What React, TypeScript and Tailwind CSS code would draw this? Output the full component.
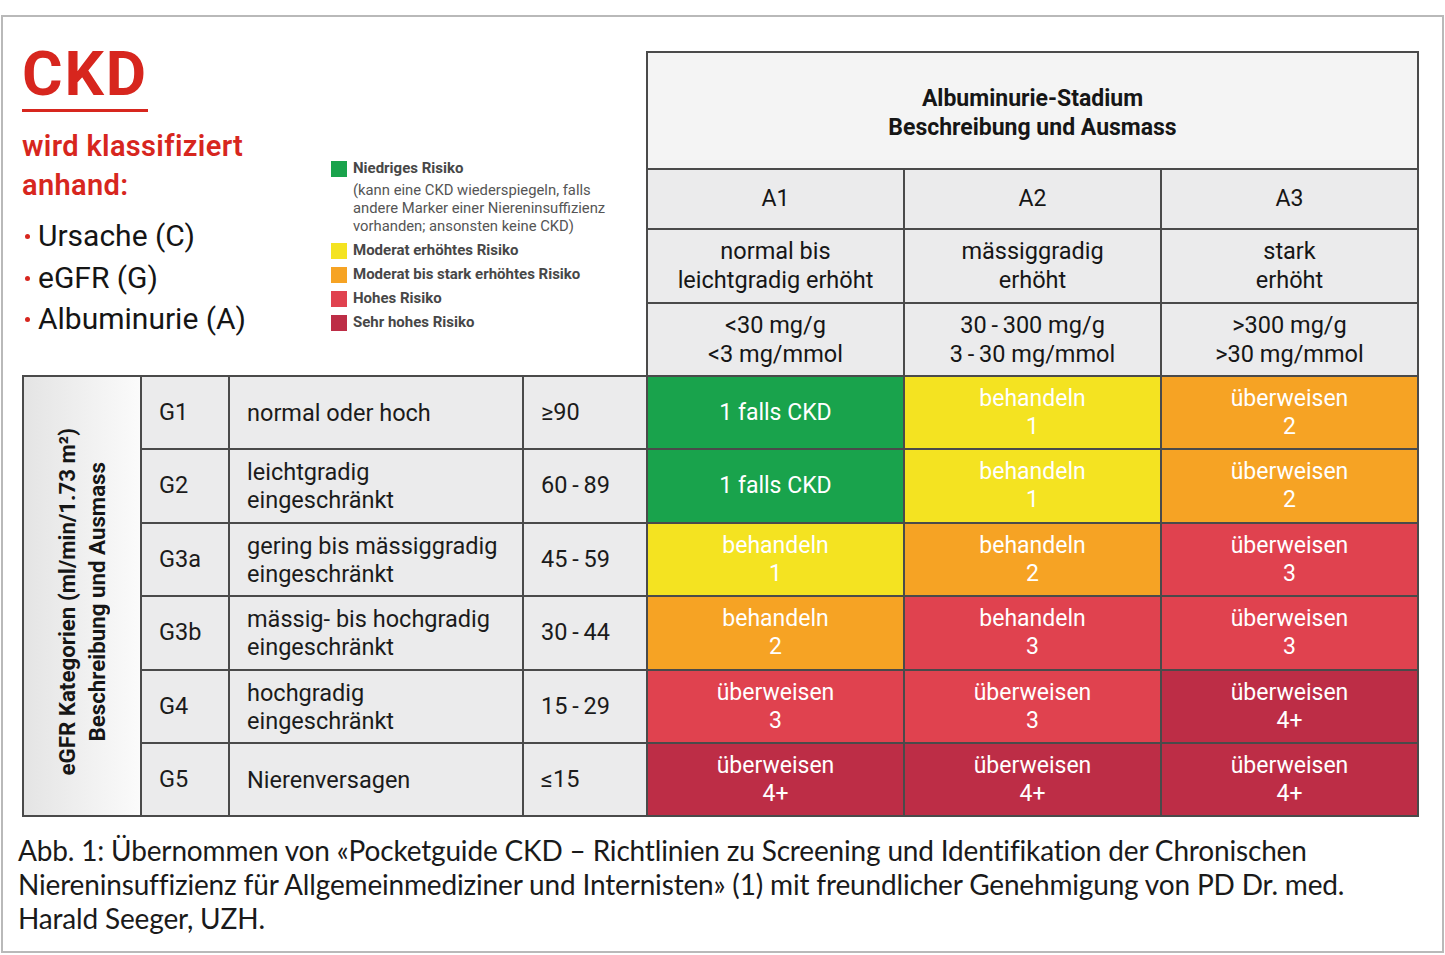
import React from "react";

const RED = "#d7261e";
const GREEN = "#19a34c";
const YELLOW = "#f4e321";
const ORANGE = "#f6a324";
const CORAL = "#e0424f";
const WINE = "#bd2d46";

type Cell = { bg: string; lines: string[] };

const rows: { g: string; desc: string[]; range: string; cells: Cell[] }[] = [
  {
    g: "G1",
    desc: ["normal oder hoch"],
    range: "≥90",
    cells: [
      { bg: "bg-[#19a34c]", lines: ["1 falls CKD"] },
      { bg: "bg-[#f4e321]", lines: ["behandeln", "1"] },
      { bg: "bg-[#f6a324]", lines: ["überweisen", "2"] },
    ],
  },
  {
    g: "G2",
    desc: ["leichtgradig", "eingeschränkt"],
    range: "60\u2009-\u200989",
    cells: [
      { bg: "bg-[#19a34c]", lines: ["1 falls CKD"] },
      { bg: "bg-[#f4e321]", lines: ["behandeln", "1"] },
      { bg: "bg-[#f6a324]", lines: ["überweisen", "2"] },
    ],
  },
  {
    g: "G3a",
    desc: ["gering bis mässiggradig", "eingeschränkt"],
    range: "45\u2009-\u200959",
    cells: [
      { bg: "bg-[#f4e321]", lines: ["behandeln", "1"] },
      { bg: "bg-[#f6a324]", lines: ["behandeln", "2"] },
      { bg: "bg-[#e0424f]", lines: ["überweisen", "3"] },
    ],
  },
  {
    g: "G3b",
    desc: ["mässig- bis hochgradig", "eingeschränkt"],
    range: "30\u2009-\u200944",
    cells: [
      { bg: "bg-[#f6a324]", lines: ["behandeln", "2"] },
      { bg: "bg-[#e0424f]", lines: ["behandeln", "3"] },
      { bg: "bg-[#e0424f]", lines: ["überweisen", "3"] },
    ],
  },
  {
    g: "G4",
    desc: ["hochgradig", "eingeschränkt"],
    range: "15\u2009-\u200929",
    cells: [
      { bg: "bg-[#e0424f]", lines: ["überweisen", "3"] },
      { bg: "bg-[#e0424f]", lines: ["überweisen", "3"] },
      { bg: "bg-[#bd2d46]", lines: ["überweisen", "4+"] },
    ],
  },
  {
    g: "G5",
    desc: ["Nierenversagen"],
    range: "≤15",
    cells: [
      { bg: "bg-[#bd2d46]", lines: ["überweisen", "4+"] },
      { bg: "bg-[#bd2d46]", lines: ["überweisen", "4+"] },
      { bg: "bg-[#bd2d46]", lines: ["überweisen", "4+"] },
    ],
  },
];

const legend = [
  { color: YELLOW, label: "Moderat erhöhtes Risiko" },
  { color: ORANGE, label: "Moderat bis stark erhöhtes Risiko" },
  { color: CORAL, label: "Hohes Risiko" },
  { color: WINE, label: "Sehr hohes Risiko" },
];

function Bullet({ children }: { children: React.ReactNode }) {
  return (
    <div className="flex items-center h-[41.5px]">
      <span className="w-[5px] h-[5px] rounded-full bg-[#d7261e] ml-[3px] mr-[8px] mt-[2px]" />
      <span>{children}</span>
    </div>
  );
}

function Intro() {
  return (
    <div className="w-[309px] shrink-0 pt-[26px]">
      <div className="text-[62px] leading-[62px] font-bold text-[#d7261e] tracking-[0.03em]">CKD</div>
      <div className="w-[126px] h-[3px] bg-[#d7261e] mt-[4px]" />
      <div className="mt-[15px] text-[29px] leading-[39px] font-semibold tracking-[0.012em]" style={{ color: RED }}>
        <div>wird klassifiziert</div>
        <div>anhand:</div>
      </div>
      <div className="mt-[10px] text-[30px] leading-[41.5px] text-[#151515]">
        <Bullet>Ursache (C)</Bullet>
        <Bullet>eGFR (G)</Bullet>
        <Bullet>Albuminurie (A)</Bullet>
      </div>
    </div>
  );
}

function Legend() {
  return (
    <div className="w-[315px] shrink-0 pt-[139.5px] text-[#474747]">
      <div className="flex items-center h-[24px] gap-[6px]">
        <span className="w-[16px] h-[16px] shrink-0" style={{ background: GREEN }} />
        <span className="text-[15px] font-bold">Niedriges Risiko</span>
      </div>
      <div className="pl-[22px] text-[14.8px] leading-[18px] text-[#555]">
        <div>(kann eine CKD wiederspiegeln, falls</div>
        <div>andere Marker einer Niereninsuffizienz</div>
        <div>vorhanden; ansonsten keine CKD)</div>
      </div>
      <div className="mt-[4px]">
        {legend.map((l) => (
          <div key={l.label} className="flex items-center h-[24px] gap-[6px]">
            <span className="w-[16px] h-[16px] shrink-0" style={{ background: l.color }} />
            <span className="text-[15px] font-bold">{l.label}</span>
          </div>
        ))}
      </div>
    </div>
  );
}

function AlbuminHeader() {
  const cols = [
    { a: "A1", d: ["normal bis", "leichtgradig erhöht"], r: ["<30 mg/g", "<3 mg/mmol"] },
    { a: "A2", d: ["mässiggradig", "erhöht"], r: ["30\u2009-\u2009300 mg/g", "3\u2009-\u200930 mg/mmol"] },
    { a: "A3", d: ["stark", "erhöht"], r: [">300 mg/g", ">30 mg/mmol"] },
  ];
  return (
    <div className="mt-[34px] grid grid-cols-[255px_255px_255px] grid-rows-[115px_58px_72px_71px] gap-[2px] bg-[#4a4a4a] px-[2px] pt-[2px] text-[#161616]">
      <div className="col-span-3 bg-[#f4f4f4] flex flex-col items-center justify-center text-[23px] leading-[29px] font-bold pt-[4px]">
        <div>Albuminurie-Stadium</div>
        <div>Beschreibung und Ausmass</div>
      </div>
      {cols.map((c) => (
        <div key={c.a} className="bg-[#ebebec] flex items-center justify-center text-[23px]">
          {c.a}
        </div>
      ))}
      {cols.map((c) => (
        <div key={c.a + "d"} className="bg-[#ebebec] flex flex-col items-center justify-center text-[23.5px] leading-[29px]">
          {c.d.map((t) => (
            <div key={t}>{t}</div>
          ))}
        </div>
      ))}
      {cols.map((c) => (
        <div key={c.a + "r"} className="bg-[#ebebec] flex flex-col items-center justify-center text-[23.5px] leading-[29px]">
          {c.r.map((t) => (
            <div key={t}>{t}</div>
          ))}
        </div>
      ))}
    </div>
  );
}

function Body() {
  return (
    <div className="grid grid-cols-[116px_86px_292px_122px_255px_255px_255px] grid-rows-[71px_72px_71px_72px_71px_71px] gap-[2px] bg-[#4a4a4a] p-[2px] w-fit text-[23.5px] text-[#1b1b1b]">
      <div className="row-span-6 row-start-1 col-start-1 bg-gradient-to-r from-[#e4e4e4] to-[#fbfbfb] flex items-center justify-center">
        <div className="[writing-mode:vertical-rl] rotate-180 text-center text-[22.3px] leading-[30px] font-bold text-[#161616] mt-[12px]">
          <div>eGFR Kategorien (ml/min/1.73 m²)</div>
          <div>Beschreibung und Ausmass</div>
        </div>
      </div>
      {rows.map((r) => (
        <React.Fragment key={r.g}>
          <div className="col-start-2 bg-[#ebebec] flex items-center pl-[17px]">{r.g}</div>
          <div className="bg-[#ebebec] flex flex-col justify-center pl-[17px] leading-[28px]">
            {r.desc.map((d) => (
              <div key={d}>{d}</div>
            ))}
          </div>
          <div className="bg-[#ebebec] flex items-center pl-[17px]">{r.range}</div>
          {r.cells.map((c, i) => (
            <div
              key={i}
              className={`${c.bg} flex flex-col items-center justify-center text-white leading-[28px] text-[23px]`}
            >
              {c.lines.map((l) => (
                <div key={l}>{l}</div>
              ))}
            </div>
          ))}
        </React.Fragment>
      ))}
    </div>
  );
}

export default function App() {
  return (
    <div
      className="w-[1445px] h-[955px] bg-white pt-[15px] pl-[1px]"
      style={{ fontFamily: "Roboto, 'Noto Sans', sans-serif" }}
    >
      <div className="w-[1443px] h-[938px] border-2 border-[#b9b9b9] bg-white">
        <div className="pl-[19px] flex items-start">
          <Intro />
          <Legend />
          <AlbuminHeader />
        </div>
        <div className="pl-[19px]">
          <Body />
        </div>
        <div
          className="pl-[15px] mt-[16px] text-[28px] leading-[34px] text-[#1a1a1a] tracking-[-0.006em]"
          style={{ fontFamily: "Lato, 'Open Sans', sans-serif" }}
        >
          <div>Abb. 1: Übernommen von «Pocketguide CKD – Richtlinien zu Screening und Identifikation der Chronischen</div>
          <div>Niereninsuffizienz für Allgemeinmediziner und Internisten» (1) mit freundlicher Genehmigung von PD Dr. med.</div>
          <div>Harald Seeger, UZH.</div>
        </div>
      </div>
    </div>
  );
}
